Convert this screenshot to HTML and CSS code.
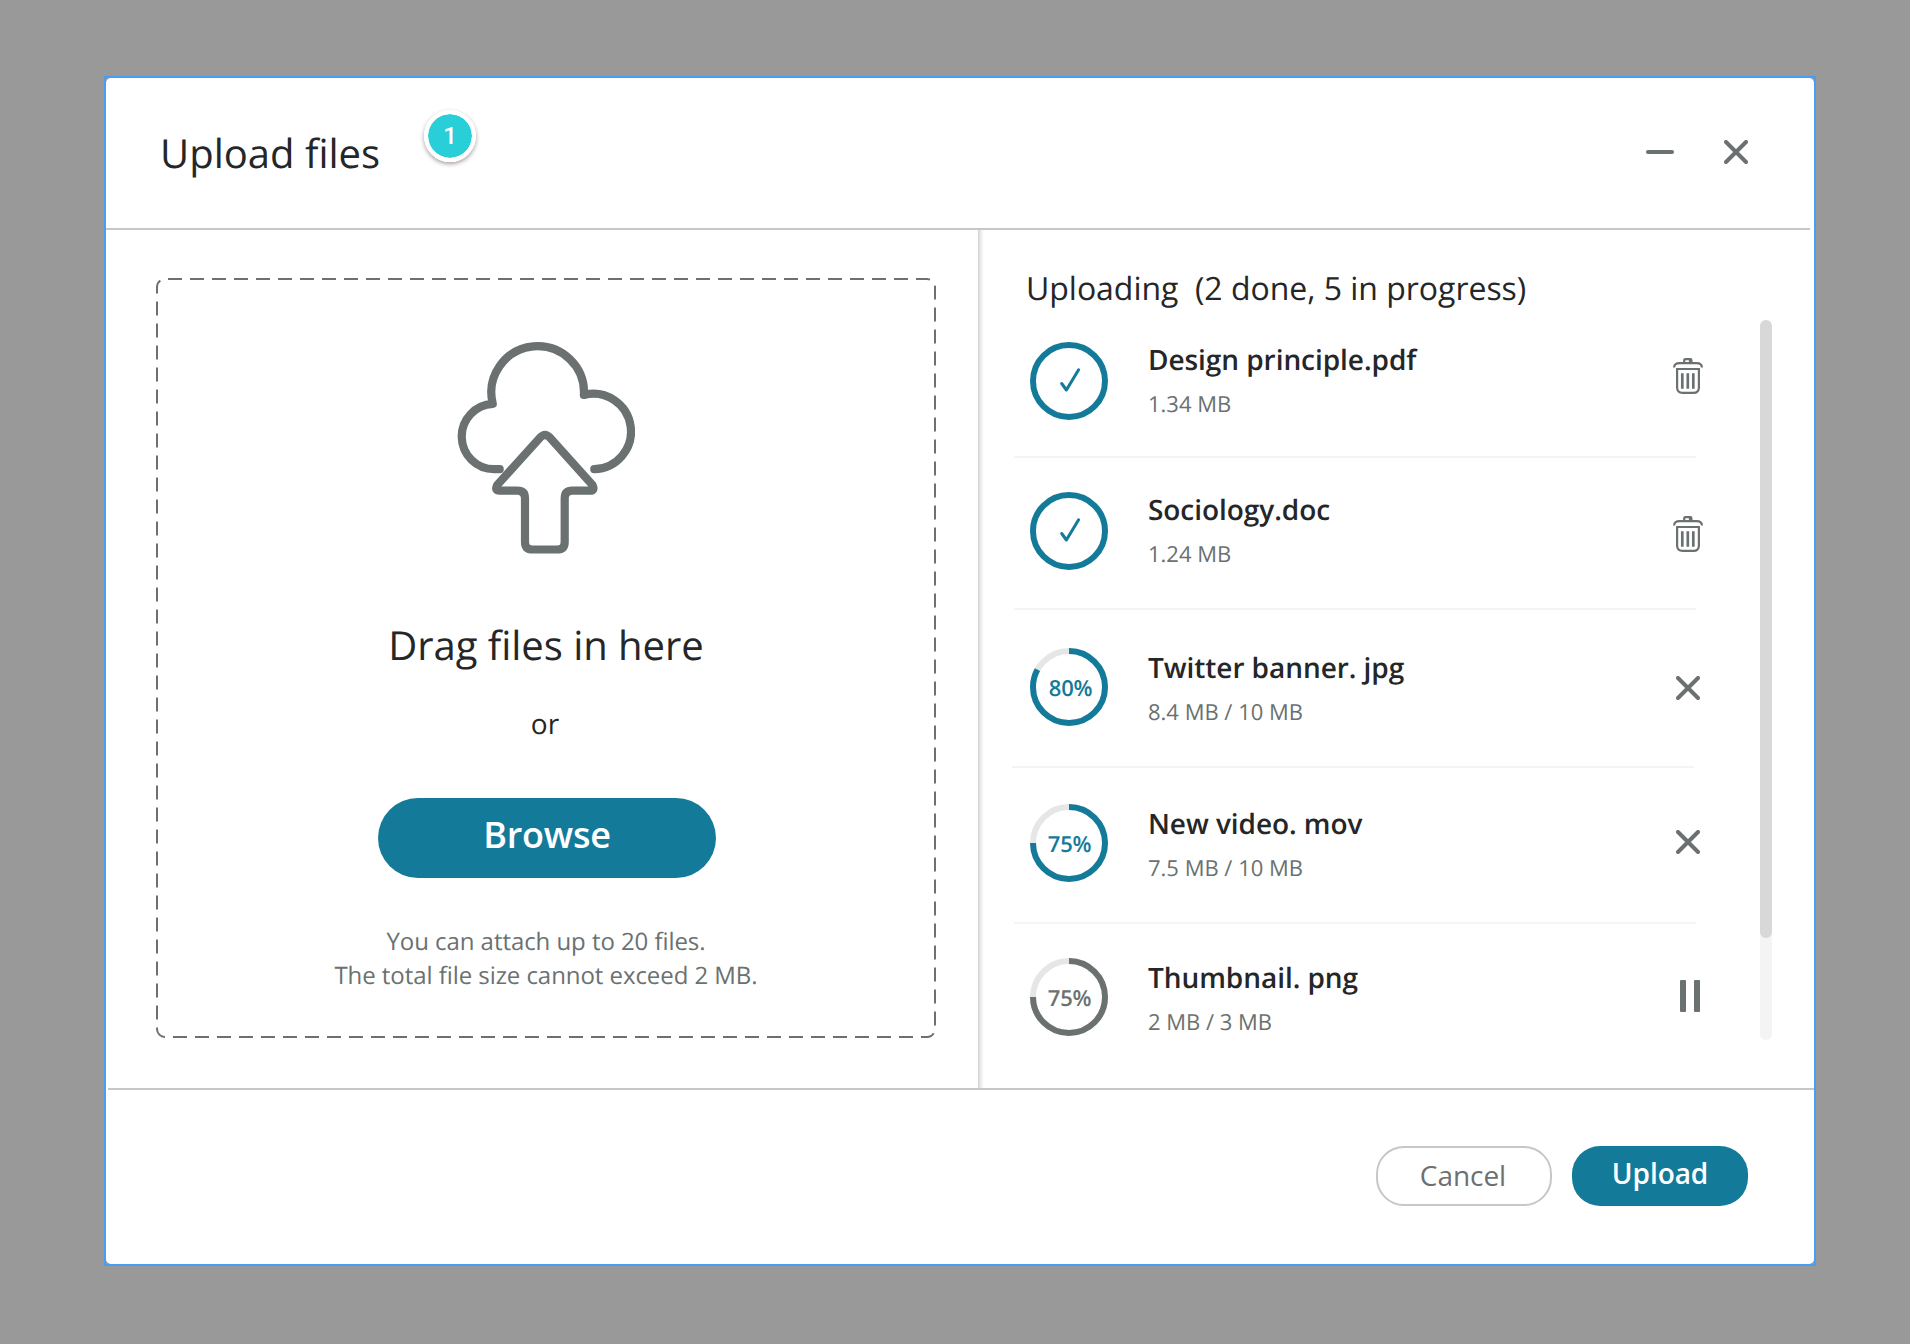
FILE: index.html
```html
<!DOCTYPE html>
<html lang="en">
<head>
<meta charset="utf-8">
<title>Upload files</title>
<link rel="stylesheet" href="styles.css">
</head>
<body>
<svg class="defs" width="0" height="0" aria-hidden="true">
  <symbol id="close" viewBox="0 0 24 24">
    <path d="M2 2L22 22M22 2L2 22" fill="none" stroke="currentColor" stroke-width="4" stroke-linecap="round"/>
  </symbol>
  <symbol id="trash" viewBox="0 0 30 36">
    <g fill="none" stroke="currentColor" stroke-width="2.2">
      <path d="M1.1 9.6C1.1 6.4 3.4 5.2 6.5 5.2H23.5C26.6 5.2 28.9 6.4 28.9 9.6"/>
      <path d="M11.2 6V2.2Q11.2 1.1 12.4 1.1H17.6Q18.4 1.1 18.4 2.2V6"/>
      <path d="M17 1V6"/>
      <path d="M4.1 11H25.9V29.4Q25.9 34.9 20.4 34.9H9.6Q4.1 34.9 4.1 29.4Z"/>
      <path d="M9.3 15.3V30.7M14.8 15.3V30.7M20.3 15.3V30.7" stroke-width="2.7"/>
    </g>
  </symbol>
</svg>
<main class="frame">
  <section class="dialog">
    <header class="header">
      <h1 class="title">Upload files</h1>
      <span class="badge">1</span>
      <div class="window-actions">
        <svg width="28" height="24"><path d="M2 12H26" stroke="currentColor" stroke-width="4" stroke-linecap="round"/></svg>
        <svg width="24" height="24"><use href="#close"/></svg>
      </div>
    </header>
    <div class="body">
      <div class="source">
        <div class="dropzone">
          <svg class="outline" width="780" height="760" viewBox="156 278 780 760">
            <path d="M168 279H927A8 8 0 0 1 935 287V1029A8 8 0 0 1 927 1037H165A8 8 0 0 1 157 1029V287A8 8 0 0 1 165 279" fill="none" stroke="currentColor" stroke-width="2" stroke-dasharray="14 8"/>
          </svg>
          <svg class="cloud" width="178" height="212" viewBox="27 22 178 212">
            <g fill="none" stroke="currentColor" stroke-width="8.2" stroke-linecap="round" stroke-linejoin="round">
              <path d="M69.7 149.2H64.2A32.67 32.67 0 0 1 62.8 83.9A46.3 46.3 0 1 1 153.9 75A37.7 37.7 0 1 1 164.3 149.2"/>
              <path d="M110.2 117.4Q115 112.6 119.8 117.4L162.5 165Q165.3 170.7 160 170.7H142.3Q134.7 170.7 134.7 178.3V221.7Q134.7 229.5 127 229.5H102.7Q95 229.5 95 221.7V178.3Q95 170.7 87.4 170.7H69.5Q64.3 170.7 67.2 165Z"/>
            </g>
          </svg>
          <h2 class="drag">Drag files in here</h2>
          <p class="or">or</p>
          <button class="browse">Browse</button>
          <p class="hint">You can attach up to 20 files.<br>The total file size cannot exceed 2 MB.</p>
        </div>
      </div>
      <div class="queue">
        <h2 class="status">Uploading&nbsp; (2 done, 5 in progress)</h2>
        <div class="scroller">
          <ul class="files">
            <li class="file">
              <div class="ring"><svg width="78" height="78"><circle cx="39" cy="39" r="36"/><path class="check" d="M31.7 41.5L36.4 48L48.6 27.8"/></svg></div>
              <div class="info"><p class="name">Design principle.pdf</p><p class="size">1.34 MB</p></div>
              <div class="action"><svg width="30" height="36"><use href="#trash"/></svg></div>
            </li>
            <li class="file">
              <div class="ring"><svg width="78" height="78"><circle cx="39" cy="39" r="36"/><path class="check" d="M31.7 41.5L36.4 48L48.6 27.8"/></svg></div>
              <div class="info"><p class="name">Sociology.doc</p><p class="size">1.24 MB</p></div>
              <div class="action"><svg width="30" height="36"><use href="#trash"/></svg></div>
            </li>
            <li class="file">
              <div class="ring"><svg width="78" height="78"><circle class="track" cx="39" cy="39" r="36"/><circle cx="39" cy="39" r="36" pathLength="100" stroke-dasharray="83 100" transform="rotate(-90 39 39)"/></svg><span class="percent">80%</span></div>
              <div class="info"><p class="name">Twitter banner. jpg</p><p class="size">8.4 MB / 10 MB</p></div>
              <div class="action"><svg width="24" height="24"><use href="#close"/></svg></div>
            </li>
            <li class="file">
              <div class="ring"><svg width="78" height="78"><circle class="track" cx="39" cy="39" r="36"/><circle cx="39" cy="39" r="36" pathLength="100" stroke-dasharray="75 100" transform="rotate(-90 39 39)"/></svg><span class="percent">75%</span></div>
              <div class="info"><p class="name">New video. mov</p><p class="size">7.5 MB / 10 MB</p></div>
              <div class="action"><svg width="24" height="24"><use href="#close"/></svg></div>
            </li>
            <li class="file paused">
              <div class="ring"><svg width="78" height="78"><circle class="track" cx="39" cy="39" r="36"/><circle cx="39" cy="39" r="36" pathLength="100" stroke-dasharray="75 100" transform="rotate(-90 39 39)"/></svg><span class="percent">75%</span></div>
              <div class="info"><p class="name">Thumbnail. png</p><p class="size">2 MB / 3 MB</p></div>
              <div class="action"><svg width="20" height="32" fill="currentColor"><rect width="6" height="32" rx="1"/><rect x="14" width="6" height="32" rx="1"/></svg></div>
            </li>
          </ul>
          <div class="scrollbar"><div class="thumb"></div></div>
        </div>
      </div>
    </div>
    <footer class="footer">
      <button class="cancel">Cancel</button>
      <button class="upload">Upload</button>
    </footer>
  </section>
</main>
</body>
</html>
```
FILE: styles.css
```css
:root {
  --teal: #147a9a;
  --grey: #6a7170;
  --ink: #252627;
  --line: #c7c7c7;
}

* { box-sizing: border-box; margin: 0; padding: 0; }

body {
  width: 1910px;
  height: 1344px;
  padding: 76px 94px 78px 104px;
  background: #999;
  color: var(--ink);
  font-family: "Open Sans", sans-serif;
  text-rendering: geometricPrecision;
  overflow: hidden;
}

h1, h2 { font-weight: 400; }
svg { display: block; }
button { border: 0; font-family: inherit; }
.defs { position: absolute; }

.frame { width: 1712px; height: 1190px; border: 2px solid #479ef5; }

.dialog {
  display: flex;
  flex-direction: column;
  height: 1186px;
  border-radius: 5px;
  background: #fff;
}

/* Header */
.header {
  position: relative;
  display: flex;
  align-items: center;
  justify-content: space-between;
  height: 152px;
  margin-right: 4px;
  padding: 0 62px 0 54px;
  border-bottom: 2px solid var(--line);
}
.title { font-size: 40px; line-height: 54px; }
.badge {
  position: absolute;
  left: 318px;
  top: 32px;
  width: 52px;
  height: 52px;
  border: 4px solid #fff;
  border-radius: 50%;
  background: #28cfd9;
  background-clip: padding-box;
  box-shadow: 0 2px 4px rgba(40, 20, 40, .42);
  color: #fff;
  font: 500 24px/44px Roboto, sans-serif;
  text-align: center;
}
.badge::before {
  content: "";
  position: absolute;
  inset: -4px;
  border: 4px solid #fff;
  border-radius: 50%;
}
.window-actions { display: flex; gap: 50px; margin-top: -2px; color: var(--grey); }

/* Body */
.body { display: flex; height: 858px; }
.source { width: 872px; padding: 48px 42px 50px 50px; }
.dropzone {
  position: relative;
  display: flex;
  flex-direction: column;
  align-items: center;
  height: 760px;
  padding-top: 64px;
  text-align: center;
}
.outline { position: absolute; inset: 0; color: var(--grey); }
.cloud { color: var(--grey); }
.drag { margin-top: 64px; font-size: 40px; line-height: 54px; letter-spacing: -.03px; }
.or { margin-top: 33px; padding-right: 2px; font-size: 28px; line-height: 38px; }
.browse {
  width: 338px;
  height: 80px;
  margin: 55px 0 0 2px;
  padding-bottom: 8px;
  border-radius: 40px;
  background: var(--teal);
  color: #fff;
  font-size: 36px;
  font-weight: 600;
  letter-spacing: -.2px;
}
.hint {
  margin-top: 47px;
  color: var(--grey);
  font-size: 24px;
  letter-spacing: -.06px;
  line-height: 34px;
}

.queue {
  flex: 1;
  padding: 37px 0 0 34px;
  background: linear-gradient(90deg, #cfcfcf, #e6e6e6 2px, #fff 6px) no-repeat left / 6px 100%;
}
.status { padding-left: 14px; font-size: 32px; letter-spacing: -.03px; line-height: 44px; }
.scroller { display: flex; gap: 54px; margin-top: -1px; }
.files { width: 694px; list-style: none; }
.file {
  --divider-x: 2px;
  display: grid;
  grid-template-columns: 78px 1fr 36px;
  align-items: start;
  height: 156px;
  padding: 36px 0 0 18px;
  background: linear-gradient(#f4f4f4, #f4f4f4) no-repeat var(--divider-x) 100% / 682px 2px;
}
.file:nth-child(1) { height: 148px; padding-top: 32px; }
.file:nth-child(2) { height: 152px; padding-top: 34px; }
.file:nth-child(3) { --divider-x: 0; height: 158px; padding-top: 38px; }
.file:nth-child(5) { height: 130px; padding-top: 34px; background: none; }

.ring { display: grid; color: var(--teal); }
.ring > * { grid-area: 1 / 1; }
.ring circle { fill: none; stroke: currentColor; stroke-width: 6; }
.ring .track { stroke: #e6e6e6; }
.check { fill: none; stroke: currentColor; stroke-width: 3; stroke-linecap: round; stroke-linejoin: round; }
.percent {
  place-self: center;
  padding: 2px 0 0 1px;
  font-size: 22px;
  font-weight: 600;
  letter-spacing: -.3px;
  line-height: 30px;
}
.file:nth-child(3) .percent { padding-left: 3px; }
.paused .ring { color: var(--grey); }

.info { padding: 1px 0 0 40px; }
.file:nth-child(-n+2) .info { margin-top: -2px; }
.name { font-size: 28px; font-weight: 600; letter-spacing: -.06px; line-height: 38px; }
.size { margin-top: 10px; color: var(--grey); font-size: 22px; line-height: 31px; }

.action { display: grid; place-items: center; height: 80px; color: var(--grey); }
.file:nth-child(1) .action { margin-top: -6px; }
.file:nth-child(2) .action { margin-top: 2px; }
.file:nth-child(4) .action,
.file:nth-child(5) .action { margin-top: -2px; }
.paused .action { padding-left: 4px; }

.scrollbar { width: 12px; height: 720px; margin-top: 10px; border-radius: 6px; background: #f4f4f4; }
.thumb { height: 618px; border-radius: 6px; background: #d8d8d8; }

/* Footer */
.footer {
  display: flex;
  justify-content: flex-end;
  gap: 20px;
  height: 176px;
  margin-left: 2px;
  padding: 56px 66px 0 0;
  border-top: 2px solid var(--line);
}
.cancel, .upload { width: 176px; height: 60px; border-radius: 28px; font-size: 28px; }
.cancel { padding: 0 2px 2px 0; border: 2px solid var(--line); background: #fff; color: var(--grey); letter-spacing: -.05px; }
.upload { padding-bottom: 6px; background: var(--teal); color: #fff; font-weight: 600; letter-spacing: -.05px; }
```
